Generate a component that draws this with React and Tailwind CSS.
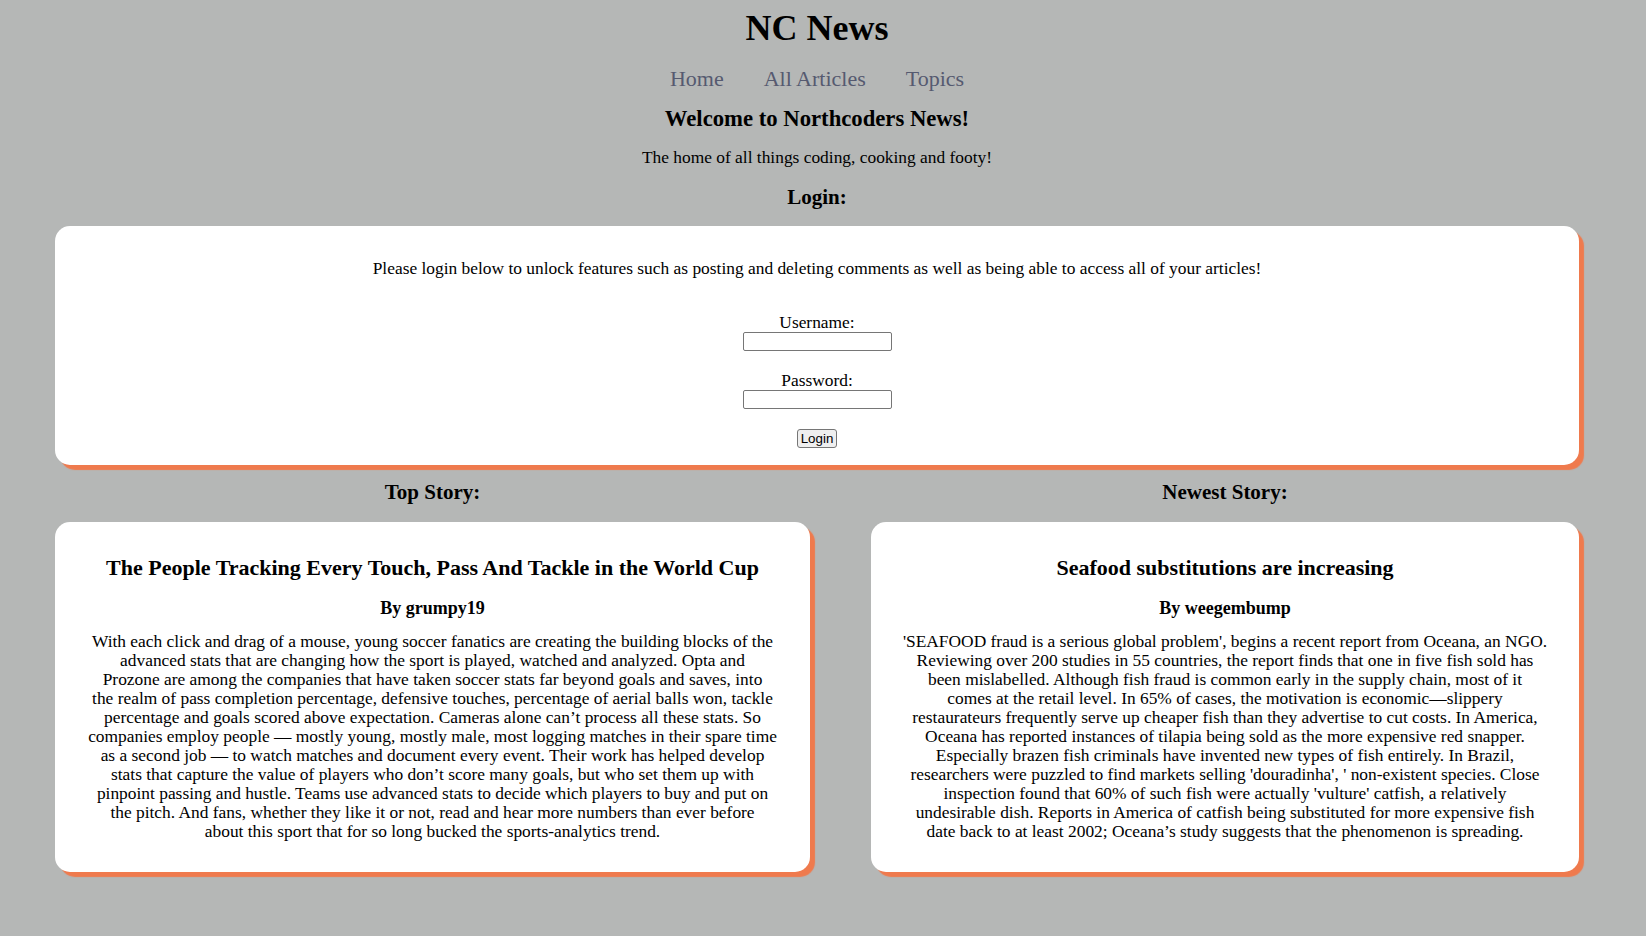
const topStory = {
  title: 'The People Tracking Every Touch, Pass And Tackle in the World Cup',
  author: 'grumpy19',
  lines: [
    'With each click and drag of a mouse, young soccer fanatics are creating the building blocks of the',
    'advanced stats that are changing how the sport is played, watched and analyzed. Opta and',
    'Prozone are among the companies that have taken soccer stats far beyond goals and saves, into',
    'the realm of pass completion percentage, defensive touches, percentage of aerial balls won, tackle',
    'percentage and goals scored above expectation. Cameras alone can’t process all these stats. So',
    'companies employ people — mostly young, mostly male, most logging matches in their spare time',
    'as a second job — to watch matches and document every event. Their work has helped develop',
    'stats that capture the value of players who don’t score many goals, but who set them up with',
    'pinpoint passing and hustle. Teams use advanced stats to decide which players to buy and put on',
    'the pitch. And fans, whether they like it or not, read and hear more numbers than ever before',
    'about this sport that for so long bucked the sports-analytics trend.',
  ],
};

const newestStory = {
  title: 'Seafood substitutions are increasing',
  author: 'weegembump',
  lines: [
    "'SEAFOOD fraud is a serious global problem', begins a recent report from Oceana, an NGO.",
    'Reviewing over 200 studies in 55 countries, the report finds that one in five fish sold has',
    'been mislabelled. Although fish fraud is common early in the supply chain, most of it',
    'comes at the retail level. In 65% of cases, the motivation is economic—slippery',
    'restaurateurs frequently serve up cheaper fish than they advertise to cut costs. In America,',
    'Oceana has reported instances of tilapia being sold as the more expensive red snapper.',
    'Especially brazen fish criminals have invented new types of fish entirely. In Brazil,',
    "researchers were puzzled to find markets selling 'douradinha', ' non-existent species. Close",
    "inspection found that 60% of such fish were actually 'vulture' catfish, a relatively",
    'undesirable dish. Reports in America of catfish being substituted for more expensive fish',
    'date back to at least 2002; Oceana’s study suggests that the phenomenon is spreading.',
  ],
};

const StoryCard = ({ heading, story }) => (
  <div className="flex flex-col">
    <h3 className="text-center text-[21px] font-bold leading-[24px] mt-[15px]">{heading}</h3>
    <div className="mt-[18px] bg-white rounded-[15px] shadow-[5px_5px_1px_#ef7a4d] pt-[32px] pb-[31px] text-center">
      <h2 className="text-[22px] font-bold leading-[28px]">{story.title}</h2>
      <p className="mt-[16px] text-[18px] font-bold leading-[20px]">By {story.author}</p>
      <p className="mt-[14px] text-[17.4px] leading-[19px]">
        {story.lines.map((line, i) => (
          <span key={i} className="block whitespace-nowrap">{line}</span>
        ))}
      </p>
    </div>
  </div>
);

const App = () => {
  return (
    <div className="min-h-screen bg-[#b5b7b6] text-black font-['Liberation_Serif','Times_New_Roman',serif] pt-[8px] pb-10">
      <div className="w-[1634px]">
        <header className="flex flex-col items-center">
          <h1 className="text-[36px] font-bold leading-[40px]">NC News</h1>
          <nav className="mt-[19px] flex gap-[40px] text-[22px] leading-[24px] text-[#555a70]">
            <a href="#">Home</a>
            <a href="#">All Articles</a>
            <a href="#">Topics</a>
          </nav>
          <h3 className="mt-[15px] text-[22.7px] font-bold leading-[26px]">Welcome to Northcoders News!</h3>
          <p className="mt-[15px] text-[17.4px] leading-[20px]">The home of all things coding, cooking and footy!</p>
          <h3 className="mt-[18px] text-[21px] font-bold leading-[24px]">Login:</h3>
        </header>

        <div className="pl-[55px]">
          <div className="mt-[17px] w-[1524px] bg-white rounded-[15px] shadow-[5px_5px_1px_#ef7a4d] pt-[32px] pb-[17px] flex flex-col items-center text-[17.4px]">
            <p className="leading-[20px]">
              Please login below to unlock features such as posting and deleting comments as well as being able to access all of your articles!
            </p>
            <form className="mt-[35px] flex flex-col items-center" onSubmit={e => e.preventDefault()}>
              <label htmlFor="username" className="leading-[19px]">Username:</label>
              <input id="username" type="text" className="w-[149px] h-[19px] bg-white border border-[#767676] rounded-[2px]" />
              <label htmlFor="password" className="mt-[20px] leading-[19px]">Password:</label>
              <input id="password" type="password" className="w-[149px] h-[19px] bg-white border border-[#767676] rounded-[2px]" />
              <button
                type="submit"
                className="mt-[20px] h-[19px] px-[3px] bg-[#efefef] border border-[#767676] rounded-[3px] text-[13.33px] leading-[15px] font-['Liberation_Sans',Arial,sans-serif]"
              >
                Login
              </button>
            </form>
          </div>

          <div className="grid grid-cols-[755px_708px] gap-x-[61px]">
            <StoryCard heading="Top Story:" story={topStory} />
            <StoryCard heading="Newest Story:" story={newestStory} />
          </div>
        </div>
      </div>
    </div>
  );
};

export default App;
